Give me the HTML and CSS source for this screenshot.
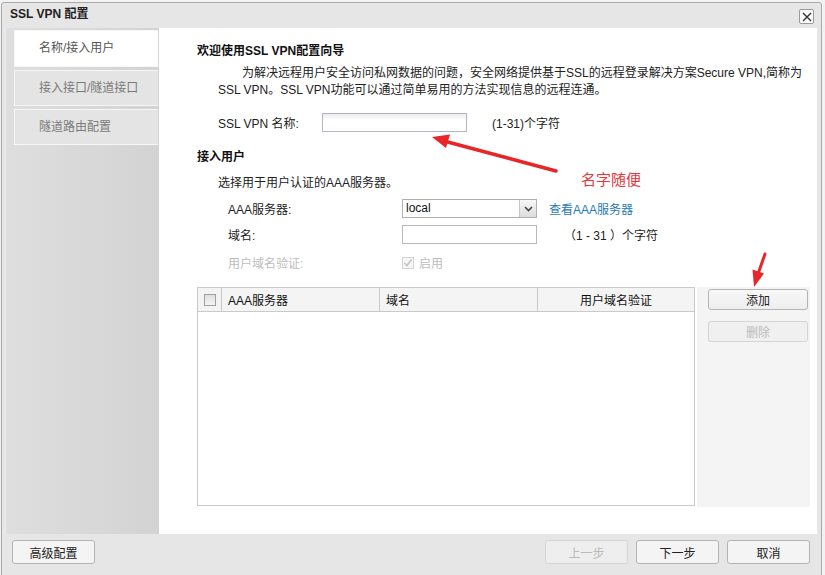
FILE: index.html
```html
<!DOCTYPE html>
<html lang="zh-CN">
<head>
  <meta charset="UTF-8">
  <title>SSL VPN 配置</title>
  <link rel="stylesheet" href="styles.css">
</head>
<body>
  <div class="dialog">
    <div class="titlebar">
      <span class="title">SSL VPN 配置</span>
      <span class="close">
        <svg width="10" height="10" viewBox="0 0 10 10"><path d="M1 1L9 9M9 1L1 9" stroke="#333" stroke-width="1.4"/></svg>
      </span>
    </div>

    <div class="main">
      <div class="sidebar">
        <div class="tab active">名称/接入用户</div>
        <div class="tab">接入接口/隧道接口</div>
        <div class="tab">隧道路由配置</div>
      </div>

      <div class="content">
        <div class="heading">欢迎使用SSL VPN配置向导</div>
        <p class="intro">为解决远程用户安全访问私网数据的问题，安全网络提供基于SSL的远程登录解决方案Secure VPN,简称为<br>SSL VPN。SSL VPN功能可以通过简单易用的方法实现信息的远程连通。</p>

        <div class="row name-row">
          <label class="lbl-name">SSL VPN 名称:</label>
          <span class="textbox tb-name"></span>
          <span class="hint hint-name">(1-31)个字符</span>
        </div>

        <div class="heading sub">接入用户</div>
        <div class="desc">选择用于用户认证的AAA服务器。</div>

        <div class="row form-row first">
          <label class="lbl">AAA服务器:</label>
          <span class="select">
            <span class="select-val">local</span>
            <span class="select-btn">
              <svg width="9" height="6" viewBox="0 0 9 6"><path d="M1 1L4.5 4.5L8 1" fill="none" stroke="#444" stroke-width="1.6"/></svg>
            </span>
          </span>
          <a class="link" href="#">查看AAA服务器</a>
        </div>

        <div class="row form-row">
          <label class="lbl">域名:</label>
          <span class="textbox tb-domain"></span>
          <span class="hint hint-domain">（1 - 31 ）个字符</span>
        </div>

        <div class="row form-row verify">
          <label class="lbl muted">用户域名验证:</label>
          <span class="chk chk-off">
            <svg width="10" height="10" viewBox="0 0 10 10"><path d="M1.5 5L4 7.5L8.5 1.5" fill="none" stroke="#c4c4c4" stroke-width="1.6"/></svg>
          </span>
          <span class="muted">启用</span>
        </div>

        <div class="table-area">
          <div class="grid">
            <div class="grid-head">
              <div class="col col-chk"><span class="chk chk-head"></span></div>
              <div class="col col-aaa">AAA服务器</div>
              <div class="col col-dom">域名</div>
              <div class="col col-ver">用户域名验证</div>
            </div>
          </div>
          <div class="side-btns">
            <button class="btn small">添加</button>
            <button class="btn small" disabled>删除</button>
          </div>
        </div>
      </div>
    </div>

    <div class="footer">
      <button class="btn foot">高级配置</button>
      <div class="foot-right">
        <button class="btn foot" disabled>上一步</button>
        <button class="btn foot">下一步</button>
        <button class="btn foot">取消</button>
      </div>
    </div>
  </div>

  <!-- annotations drawn on top of the screenshot -->
  <svg class="marks" width="825" height="575" viewBox="0 0 825 575">
    <line x1="556" y1="171" x2="444" y2="141" stroke="#e8262a" stroke-width="3.5" stroke-linecap="round"/>
    <polygon points="432,137 450,134.5 446,148" fill="#e8262a"/>
    <line x1="765" y1="254" x2="758" y2="274" stroke="#e8262a" stroke-width="3" stroke-linecap="round"/>
    <polygon points="754,287 764,273.5 752.5,269.5" fill="#e8262a"/>
  </svg>
  <span class="note">名字随便</span>
</body>
</html>
```

FILE: styles.css
```css
body {
  margin: 0;
  background: #f2f2f2;
  font-family: "Liberation Sans", "Noto Sans CJK SC", sans-serif;
  font-size: 12px;
  color: #222;
  position: relative;
  width: 825px;
  height: 575px;
  overflow: hidden;
}
.dialog {
  margin: 2px 0 0 1px;
  width: 819px;
  height: 580px;
  border: 1px solid #a9a9a9;
  border-radius: 3px 3px 0 0;
  background: #e6e6e6;
}
.titlebar {
  height: 25px;
  display: flex;
  align-items: flex-start;
  justify-content: space-between;
  padding: 0 7px 0 8px;
}
.title {
  font-weight: bold;
  line-height: 17px;
  margin-top: 3px;
  color: #222;
}
.close {
  margin-top: 6px;
  width: 13px;
  height: 13px;
  border: 1px solid #9a9a9a;
  border-radius: 2px;
  background: #fafafa;
  display: flex;
  align-items: center;
  justify-content: center;
}
.main {
  display: flex;
  height: 506px;
  margin: 0 4px 0 3px;
}
.sidebar {
  width: 154px;
  padding: 2px 0 0 9px;
  box-sizing: border-box;
  background: linear-gradient(to right, #dedede, #d3d3d3);
  border-left: 1px solid #ececec;
}
.tab {
  height: 36px;
  width: 144px;
  box-sizing: border-box;
  margin-bottom: 3px;
  margin-left: -1px;
  border: 1px solid #f6f6f6;
  border-right: none;
  background: #e4e4e4;
  color: #7a7a7a;
  line-height: 34px;
  padding-left: 24px;
}
.tab.active {
  background: #fff;
  color: #555;
  height: 37px;
}
.content {
  flex: 1;
  background: #fff;
  padding: 15px 0 0 38px;
  box-sizing: border-box;
}
.heading {
  font-weight: bold;
  line-height: 17px;
  color: #111;
}
.heading.sub {
  margin-top: 17px;
}
.intro {
  margin: 5px 0 0 21px;
  line-height: 17px;
  text-indent: 24px;
  white-space: nowrap;
  color: #222;
}
.row {
  display: flex;
  align-items: center;
  height: 19px;
}
.name-row {
  margin: 14px 0 0 21px;
}
.lbl-name {
  width: 104px;
}
.textbox {
  display: block;
  height: 19px;
  box-sizing: border-box;
  border: 1px solid #b4b4c4;
  background: linear-gradient(#ececf0, #fff 6px);
}
.tb-name {
  width: 145px;
}
.hint-name {
  margin-left: 25px;
}
.desc {
  margin: 9px 0 0 21px;
  line-height: 17px;
}
.form-row {
  margin: 7px 0 0 31px;
}
.form-row.first {
  margin-top: 7px;
}
.form-row.verify {
  margin-top: 9px;
}
.lbl {
  width: 174px;
}
.muted {
  color: #bdbdbd;
}
.select {
  width: 135px;
  height: 19px;
  box-sizing: border-box;
  border: 1px solid #b0b0b0;
  display: flex;
  background: #fff;
}
.select-val {
  flex: 1;
  padding-left: 3px;
  line-height: 17px;
  color: #111;
}
.select-btn {
  width: 16px;
  border-left: 1px solid #c4c4c4;
  background: linear-gradient(#f8f8f8, #dcdcdc);
  display: flex;
  align-items: center;
  justify-content: center;
}
.link {
  margin-left: 12px;
  color: #1f7ab8;
  text-decoration: none;
}
.tb-domain {
  width: 135px;
  border-color: #b8b8b8;
  background: #fff;
}
.hint-domain {
  margin-left: 27px;
}
.chk {
  display: flex;
  align-items: center;
  justify-content: center;
  width: 12px;
  height: 12px;
  box-sizing: border-box;
}
.chk-off {
  border: 1px solid #d2d2d2;
  background: #f6f6f6;
  margin-right: 5px;
}
.table-area {
  display: flex;
  margin-top: 15px;
  height: 220px;
}
.grid {
  width: 498px;
  height: 219px;
  box-sizing: border-box;
  border: 1px solid #cacaca;
  background: #fff;
}
.grid-head {
  display: flex;
  height: 23px;
  background: #f4f4f4;
  border-bottom: 1px solid #cacaca;
}
.col {
  display: flex;
  align-items: center;
  border-right: 1px solid #cacaca;
  color: #111;
  box-sizing: border-box;
}
.col-chk {
  width: 24px;
  justify-content: center;
}
.col-aaa {
  width: 158px;
  padding-left: 6px;
}
.col-dom {
  width: 158px;
  padding-left: 6px;
}
.col-ver {
  flex: 1;
  justify-content: center;
  border-right: none;
}
.chk-head {
  border: 1px solid #a0a0a0;
  background: linear-gradient(#e0e0e0, #f4f4f4);
}
.side-btns {
  margin-left: 2px;
  width: 113px;
  height: 220px;
  box-sizing: border-box;
  background: #f4f4f4;
  padding: 2px 2px 0 11px;
  display: flex;
  flex-direction: column;
  gap: 11px;
}
.btn {
  font-family: inherit;
  font-size: 12px;
  color: #222;
  background: linear-gradient(#f8f8f8, #eeeeee);
  border: 1px solid #b4b4b4;
  border-radius: 3px;
  padding: 0;
  cursor: pointer;
}
.btn:disabled {
  color: #bbb;
  border-color: #d4d4d4;
  background: #f0f0f0;
}
.btn.small {
  width: 100px;
  height: 21px;
}
.footer {
  display: flex;
  justify-content: space-between;
  padding: 6px 11px 0 10px;
}
.foot-right {
  display: flex;
  gap: 8px;
}
.btn.foot {
  width: 83px;
  height: 24px;
  background: #f4f4f4;
}
.btn.foot:disabled {
  background: #eeeeee;
}
.marks {
  position: absolute;
  left: 0;
  top: 0;
  pointer-events: none;
}
.note {
  position: absolute;
  left: 581px;
  top: 170px;
  font-size: 15px;
  line-height: 20px;
  color: #e3393c;
}
```
